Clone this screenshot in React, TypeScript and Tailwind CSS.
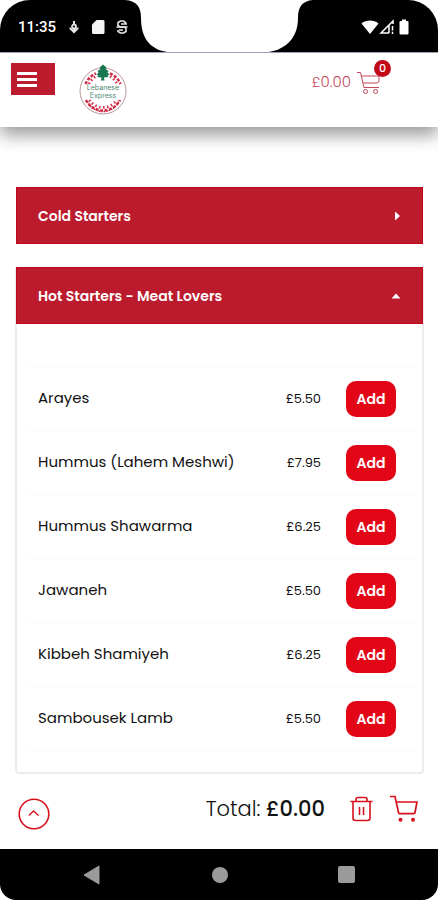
import { useState } from "react";

interface MenuItem {
  id: number;
  name: string;
  price: number;
}

interface MenuSection {
  id: string;
  title: string;
  items: MenuItem[];
}

const sections: MenuSection[] = [
  { id: "cold", title: "Cold Starters", items: [] },
  {
    id: "hot-meat",
    title: "Hot Starters - Meat Lovers",
    items: [
      { id: 1, name: "Arayes", price: 5.5 },
      { id: 2, name: "Hummus (Lahem Meshwi)", price: 7.95 },
      { id: 3, name: "Hummus Shawarma", price: 6.25 },
      { id: 4, name: "Jawaneh", price: 5.5 },
      { id: 5, name: "Kibbeh Shamiyeh", price: 6.25 },
      { id: 6, name: "Sambousek Lamb", price: 5.5 },
    ],
  },
];

const formatPrice = (value: number) => `£${value.toFixed(2)}`;

function StatusBar() {
  return (
    <div className="relative flex h-[52px] items-center justify-between rounded-t-[30px] bg-black pt-0.5 pr-7 pl-[18px] text-white">
      <div className="flex items-center">
        <span className="font-['Roboto',sans-serif] text-[15px] font-medium">
          11:35
        </span>
        <svg className="ml-2.5 h-4 w-4" viewBox="0 0 16 16" fill="none" stroke="#e5e5e5">
          <path d="M8 2v4M8 9v5M4.500 8.500v1l3.500 3.500 3.500-3.500v-1" strokeWidth="2" />
          <circle cx="8" cy="7.500" r="2" strokeWidth="1.800" />
        </svg>
        <svg className="ml-2 h-4 w-4" viewBox="0 0 16 16" fill="#f5f5f5">
          <path d="M6.500 1H13a1.500 1.500 0 0 1 1.500 1.500v11A1.500 1.500 0 0 1 13 15H3.500A1.500 1.500 0 0 1 2 13.500V5.500z" />
        </svg>
        <svg className="ml-2 h-4 w-4" viewBox="0 0 16 16" fill="none" stroke="#e5e5e5" strokeWidth="1.600">
          <path d="M11.500 5V3.500L9.500 2h-3L4 3.500v3L6 8h4.500L12 9.500v3L9.500 14h-3L4 12.500V11" />
          <path d="M2.500 8h11M7 5h6M5 11h4" />
        </svg>
      </div>

      <div className="flex items-center">
        <svg className="h-4 w-[18px]" viewBox="0 0 18 16" fill="currentColor">
          <path d="M9 15 .5 4.500C3 2.300 6 1.500 9 1.500s6 .8 8.500 3z" />
        </svg>
        <svg className="h-4 w-[15px]" viewBox="0 0 15 16" fill="none" stroke="currentColor">
          <path d="M10 14H2L14 2v3M10 6v8" strokeWidth="1.500" />
          <path d="M13.500 7v4.500M13.500 12.800V15" strokeWidth="1.500" />
        </svg>
        <svg className="ml-1 h-4 w-3" viewBox="0 0 12 16" fill="currentColor">
          <path d="M4 .5h4V2h1.500a1 1 0 0 1 1 1v11.500a1 1 0 0 1-1 1h-7a1 1 0 0 1-1-1V3a1 1 0 0 1 1-1H4z" />
        </svg>
      </div>

      {/* camera notch */}
      <svg
        className="absolute top-0 left-1/2 h-[52px] w-[188px] -translate-x-1/2"
        viewBox="0 0 188 52"
        fill="#fff"
      >
        <path d="M0 0C12 1 16 7 16 18C16 37 24 49 42 52H144C162 49 173 37 173 18C173 7 177 1 188 0Z" />
      </svg>
    </div>
  );
}

function Logo() {
  return (
    <svg className="h-[52px] w-12" viewBox="0 0 48 52" role="img" aria-label="Lebanese Express">
      <circle cx="24" cy="28" r="23" fill="#fff" stroke="#b9949a" strokeWidth="1" />
      {/* checkered ring */}
      <g fill="none" stroke="#d2304a" strokeWidth="2.600">
        <path d="M6.500 21A19 19 0 0 1 17 10.500M31 10.500A19 19 0 0 1 41.500 21M7 37a19 19 0 0 0 34 0" strokeDasharray="3 1.500" />
        <path d="M10 21A16 16 0 0 1 17 13.500M31 13.500A16 16 0 0 1 38 21M10.500 37a16 16 0 0 0 27 0" strokeDasharray="1.500 2.500" />
        <path d="M8.500 38.500a17 17 0 0 0 31 0" strokeWidth="1.500" strokeDasharray="1.500 1" />
      </g>
      <path
        d="M24 1.500l3.500 3-1 1.500 3 2-1 1.500 2 2-2 1 1 1.500-4.500.5.500 3h-3.500l.5-3-4.500-.5 1.500-1.500-2-1 2-2-1-1.500 3-2-1-1.500z"
        fill="#18774f"
      />
      <text x="24" y="27" textAnchor="middle" fontFamily="Inter, sans-serif" fontSize="7" fill="#4b8a70">
        Lebanese
      </text>
      <text x="24" y="35" textAnchor="middle" fontFamily="Inter, sans-serif" fontSize="7" fill="#4b8a70">
        Express
      </text>
    </svg>
  );
}

function Header({ total, count }: { total: number; count: number }) {
  return (
    <header className="flex h-[75px] items-start justify-between border-t border-gray-400 bg-white pr-[57px] pl-[11px] shadow-[0_8px_16px_rgba(0,0,0,0.4)]">
      <div className="flex items-start">
        <button
          type="button"
          aria-label="Open menu"
          className="mt-2.5 flex h-8 w-11 items-center bg-[#bb1b2c] pl-1.5"
        >
          <span className="flex flex-col gap-[3px]">
            <span className="h-[3px] w-5 bg-white" />
            <span className="h-[3px] w-5 bg-white" />
            <span className="h-[3px] w-5 bg-white" />
          </span>
        </button>
        <a href="#home" className="mt-2.5 ml-6">
          <Logo />
        </a>
      </div>

      <a href="#cart" className="mt-[15px] flex items-center gap-1.5 text-[#c4475a]">
        <span className="text-[15px] font-light">{formatPrice(total)}</span>
        <span className="relative">
          <svg className="h-7 w-6" viewBox="0 0 24 28" fill="none" stroke="currentColor">
            <path d="M0 4.500h3.500L7 19.500h15M4.500 8h17.500v5.500L20 15H6" />
            <circle cx="8.500" cy="23.500" r="2" />
            <circle cx="18.500" cy="23.500" r="2" />
          </svg>
          <span className="absolute -top-2 -right-[10px] flex h-[17px] w-[17px] items-center justify-center rounded-full bg-[#c20a17] text-[11px] font-medium text-white">
            {count}
          </span>
        </span>
      </a>
    </header>
  );
}

interface SectionProps {
  section: MenuSection;
  open: boolean;
  onToggle: () => void;
  onAdd: (item: MenuItem) => void;
}

function Section({ section, open, onToggle, onAdd }: SectionProps) {
  return (
    <section className={open ? "rounded-b border-x-2 border-b-2 border-[#ececec]" : "px-px"}>
      <h2 className={open ? "-mx-px" : ""}>
        <button
          type="button"
          aria-expanded={open}
          onClick={onToggle}
          className="flex h-[57px] w-full items-center justify-between border border-[#c4061a] bg-[#bb1b2c] px-[21px] text-left text-sm font-semibold text-white"
        >
          {section.title}
          <svg className="h-2.5 w-2.5" viewBox="0 0 10 10" fill="currentColor">
            {open ? <path d="M.5 7.500 5 2.500l4.500 5z" /> : <path d="M4 .5v9L9 5z" />}
          </svg>
        </button>
      </h2>

      {open && (
        <ul className="mt-[42px] mr-2 mb-[21px] ml-3 border-t border-[#f8f8f8]">
          {section.items.map((item) => (
            <li
              key={item.id}
              className="flex h-16 items-center border-b border-[#f8f8f8] pr-[18px] pl-[9px]"
            >
              <span className="flex-1 text-[15px]">{item.name}</span>
              <span className="text-[13px]">{formatPrice(item.price)}</span>
              <button
                type="button"
                onClick={() => onAdd(item)}
                className="ml-[25px] h-9 w-[50px] rounded-[10px] bg-[#e30617] text-sm font-semibold text-white"
              >
                Add
              </button>
            </li>
          ))}
        </ul>
      )}
    </section>
  );
}

export default function App() {
  const [openId, setOpenId] = useState<string | null>("hot-meat");
  const [basket, setBasket] = useState<MenuItem[]>([]);

  const total = basket.reduce((sum, item) => sum + item.price, 0);

  return (
    <div className="flex min-h-screen flex-col bg-white font-['Poppins','Inter',sans-serif] text-[#111]">
      <StatusBar />
      <Header total={total} count={basket.length} />

      <main className="flex flex-1 flex-col gap-[23px] pt-[60px] pr-3.5 pl-[15px]">
        {sections.map((section) => (
          <Section
            key={section.id}
            section={section}
            open={openId === section.id}
            onToggle={() => setOpenId(openId === section.id ? null : section.id)}
            onAdd={(item) => setBasket((prev) => [...prev, item])}
          />
        ))}
      </main>

      <footer className="flex h-[75px] items-center pr-5 pb-1.5 pl-[18px] text-[#d9101c]">
        <button
          type="button"
          aria-label="Back to top"
          onClick={() => window.scrollTo({ top: 0 })}
          className="mt-2.5"
        >
          <svg className="h-8 w-8" viewBox="0 0 32 32" fill="none" stroke="currentColor">
            <circle cx="16" cy="16" r="14.800" strokeWidth="1.600" />
            <path d="m11 17.500 4.500-4.500 5 4.500" strokeWidth="1.300" />
          </svg>
        </button>
        <p className="ml-auto text-[21px] text-[#111]">
          <span className="font-light">Total:</span>{" "}
          <span className="font-medium">{formatPrice(total)}</span>
        </p>
        <button
          type="button"
          aria-label="Empty basket"
          onClick={() => setBasket([])}
          className="ml-[25px]"
        >
          <svg className="h-7 w-[23px]" viewBox="0 0 23 28" fill="none" stroke="currentColor" strokeWidth="1.600">
            <path d="M.5 6.500h22M3 6.500v16.500a2.500 2.500 0 0 0 2.500 2.500h12a2.500 2.500 0 0 0 2.500-2.500V6.500" />
            <path d="M6 6.500V4.500a2 2 0 0 1 2-2h7a2 2 0 0 1 2 2v2M9.500 12v8M13.500 12v8" />
          </svg>
        </button>
        <a href="#checkout" aria-label="Checkout" className="ml-[17px]">
          <svg className="h-7 w-7" viewBox="0 0 28 28" fill="none" stroke="currentColor" strokeWidth="1.700">
            <path d="M0 1.500h5l3.500 16a1.500 1.500 0 0 0 1.500 1.200h13.500a1.500 1.500 0 0 0 1.500-1.200L27 7H6.500" />
            <circle cx="10.500" cy="24.800" r="2" fill="currentColor" stroke="none" />
            <circle cx="23" cy="24.800" r="2" fill="currentColor" stroke="none" />
          </svg>
        </a>
      </footer>

      <nav className="flex h-[51px] items-center justify-between rounded-b-2xl bg-black px-[83px] text-[#9b9b9b]">
        <button type="button" aria-label="Back">
          <svg className="h-5 w-[18px]" viewBox="0 0 18 20" fill="currentColor">
            <path d="M16 1v18L1 10z" stroke="currentColor" strokeLinejoin="round" />
          </svg>
        </button>
        <button type="button" aria-label="Home" className="h-4 w-4 rounded-full bg-[#9b9b9b]" />
        <button type="button" aria-label="Recent apps" className="h-[17px] w-[17px] rounded-xs bg-[#9b9b9b]" />
      </nav>
    </div>
  );
}
